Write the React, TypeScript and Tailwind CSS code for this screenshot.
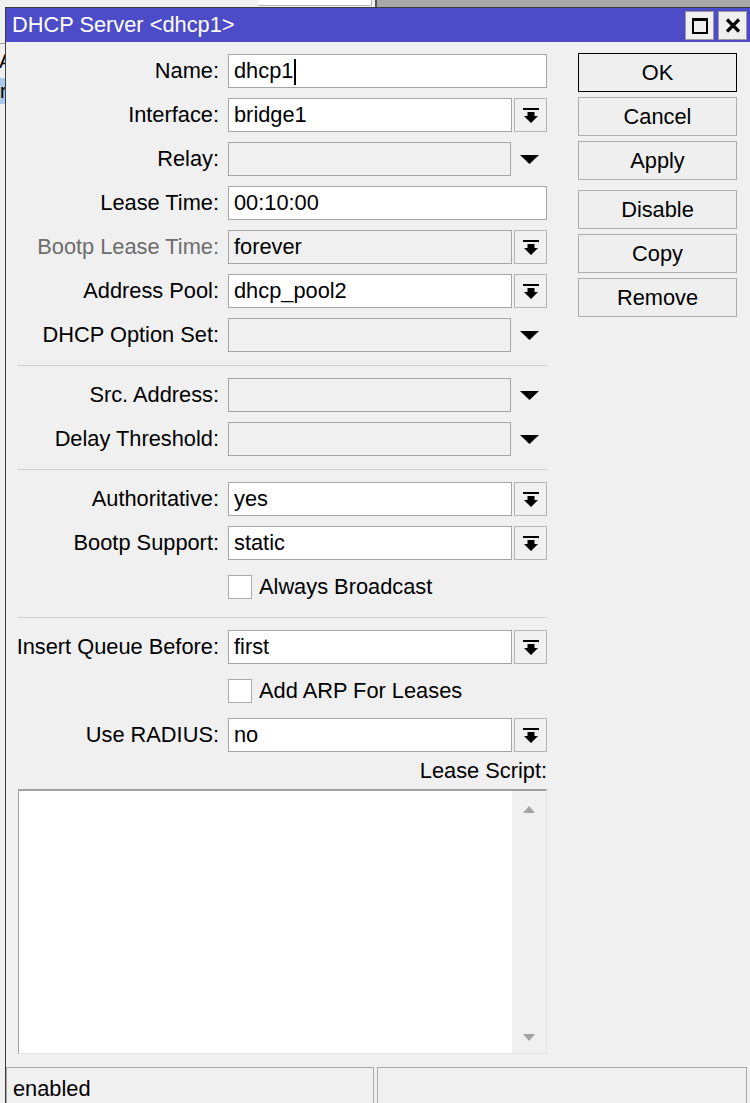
import React from 'react';

const font = { fontFamily: '"Liberation Sans", Arial, sans-serif' };

function DropIcon() {
    return (
        <svg width="16" height="15" viewBox="0 0 16 15">
            <rect x="0" y="0" width="16" height="2" fill="#000" />
            <path d="M4.5 4H11.5V8H15L8 15L1 8H4.5Z" fill="#000" />
        </svg>
    );
}

function Field({ value, disabled, caret }: { value?: string; disabled?: boolean; caret?: boolean }) {
    return (
        <div
            className={`flex-1 h-full border border-[#a5a5a5] flex items-center pl-[5px] pt-[1px] text-black ${disabled ? 'bg-[#f0f0f0]' : 'bg-white'}`}
        >
            <span>{value}</span>
            {caret && <span className="ml-[1px] w-[1.5px] h-[26px] bg-black" />}
        </div>
    );
}

function Row({ label, dim, children }: { label?: string; dim?: boolean; children: React.ReactNode }) {
    return (
        <div className="flex items-center h-[34px] shrink-0">
            <div className={`w-[201px] shrink-0 flex justify-end whitespace-nowrap pt-[1px] ${dim ? 'text-[#6d6d6d]' : 'text-black'}`}>
                {label}
            </div>
            <div className="ml-[9px] flex-1 flex h-full">{children}</div>
        </div>
    );
}

function ComboRow({ label, value, dim }: { label: string; value: string; dim?: boolean }) {
    return (
        <Row label={label} dim={dim}>
            <Field value={value} disabled={dim} />
            <div className="ml-[2px] w-[33px] h-full border border-[#b4b4b4] bg-[#f0f0f0] flex items-center justify-center">
                <DropIcon />
            </div>
        </Row>
    );
}

function EmptyCombo({ label }: { label: string }) {
    return (
        <Row label={label}>
            <div className="w-[283px] h-full border border-[#a5a5a5] bg-[#f0f0f0]" />
            <div className="flex-1 flex items-center justify-center">
                <svg width="19" height="9" viewBox="0 0 19 9">
                    <path d="M0 0H19L9.5 9Z" fill="#000" />
                </svg>
            </div>
        </Row>
    );
}

function Check({ label }: { label: string }) {
    return (
        <Row>
            <div className="flex items-center">
                <div className="w-[24px] h-[24px] border border-[#adadad] bg-white" />
                <span className="ml-[7px] pt-[1px]">{label}</span>
            </div>
        </Row>
    );
}

function Sep() {
    return <div className="h-px shrink-0 bg-[#cfcfcf] mt-[3px] mb-[2px]" />;
}

function Btn({ label, primary, gap }: { label: string; primary?: boolean; gap?: string }) {
    return (
        <div
            className={`h-[39px] shrink-0 flex items-center justify-center pt-[1px] bg-[#efefef] border ${primary ? 'border-black' : 'border-[#adadad]'} ${gap ?? ''}`}
        >
            {label}
        </div>
    );
}

export default function App() {
    return (
        <div className="relative w-[750px] h-[1103px] overflow-hidden bg-[#f0f0f0] pt-[7px] pl-[5px] text-[21.8px]" style={font}>
            {/* window behind */}
            <div className="absolute top-0 left-0 w-[750px] h-[7px] flex">
                <div className="w-[258px] bg-[#f0f0f0]" />
                <div className="w-[114px] h-[6px] bg-white border-r border-b border-[#b8b8b8]" />
                <div className="w-[3px] bg-[#f0f0f0]" />
                <div className="w-[2px] bg-[#555]" />
                <div className="flex-1 bg-[#a8a8a8]" />
            </div>
            <div className="absolute top-0 left-0 w-[5px] h-[1103px] bg-[#f0f0f0]">
                <div className="h-[44px] border-b border-[#a0a0a0]" />
                <div className="h-[34px] leading-[34px] text-[20px] pl-[1px] -ml-[2px] overflow-hidden">A</div>
                <div className="h-[26px] bg-[#a9c8ea] text-[20px] leading-[26px] overflow-hidden">r</div>
            </div>

            <div className="relative w-[745px] h-[1096px] border-l border-t border-[#3c3c3c] bg-[#f0f0f0] flex flex-col">
                {/* title bar */}
                <div className="h-[34px] shrink-0 bg-[#4c4cc8] flex items-center pl-[6px] pt-[1px] text-white">
                    <span className="flex-1">DHCP Server &lt;dhcp1&gt;</span>
                    <div className="w-[29px] h-[29px] bg-[#efefef] border border-[#9a9a9a] flex items-center justify-center">
                        <div className="w-[16px] h-[16px] border-2 border-t-[3px] border-black" />
                    </div>
                    <div className="ml-[4px] mr-[3px] w-[29px] h-[29px] bg-[#efefef] border border-[#9a9a9a] flex items-center justify-center">
                        <svg width="16" height="15" viewBox="0 0 16 15">
                            <path d="M2 1.5L14 13.5M14 1.5L2 13.5" stroke="#000" strokeWidth="3.2" />
                        </svg>
                    </div>
                </div>

                {/* body */}
                <div className="flex shrink-0">
                    <div className="w-[541px] pl-[12px] pt-[12px] flex flex-col gap-[10px]">
                        <Row label="Name:">
                            <Field value="dhcp1" caret />
                        </Row>
                        <ComboRow label="Interface:" value="bridge1" />
                        <EmptyCombo label="Relay:" />
                        <Row label="Lease Time:">
                            <Field value="00:10:00" />
                        </Row>
                        <ComboRow label="Bootp Lease Time:" value="forever" dim />
                        <ComboRow label="Address Pool:" value="dhcp_pool2" />
                        <EmptyCombo label="DHCP Option Set:" />
                        <Sep />
                        <EmptyCombo label="Src. Address:" />
                        <EmptyCombo label="Delay Threshold:" />
                        <Sep />
                        <ComboRow label="Authoritative:" value="yes" />
                        <ComboRow label="Bootp Support:" value="static" />
                        <Check label="Always Broadcast" />
                        <Sep />
                        <ComboRow label="Insert Queue Before:" value="first" />
                        <Check label="Add ARP For Leases" />
                        <ComboRow label="Use RADIUS:" value="no" />
                        <div className="h-[18px] shrink-0 flex items-center justify-end whitespace-nowrap pt-[1px]">Lease Script:</div>
                        <div className="-mt-[1px] h-[265px] shrink-0 flex bg-white border-t-2 border-l border-[#a0a0a0] border-r border-b border-r-[#e3e3e3] border-b-[#e3e3e3]">
                            <div className="flex-1" />
                            <div className="w-[34px] bg-[#f0f0f0] flex flex-col items-center justify-between pt-[15px] pb-[12px]">
                                <svg width="12" height="7" viewBox="0 0 12 7">
                                    <path d="M6 0L12 7H0Z" fill="#a3a3a3" />
                                </svg>
                                <svg width="12" height="7" viewBox="0 0 12 7">
                                    <path d="M0 0H12L6 7Z" fill="#a3a3a3" />
                                </svg>
                            </div>
                        </div>
                    </div>

                    <div className="ml-[31px] w-[159px] pt-[11px] flex flex-col gap-[5px]">
                        <Btn label="OK" primary />
                        <Btn label="Cancel" />
                        <Btn label="Apply" />
                        <Btn label="Disable" gap="mt-[5px]" />
                        <Btn label="Copy" />
                        <Btn label="Remove" />
                    </div>
                </div>

                {/* status bar */}
                <div className="mt-[13px] flex-1 flex">
                    <div className="w-[368px] border-t border-l border-r border-[#a8a8a8] pl-[6px] pt-[5px]">enabled</div>
                    <div className="ml-[3px] flex-1 mr-[3px] border-t border-l border-r border-[#a8a8a8]" />
                </div>
            </div>
        </div>
    );
}
